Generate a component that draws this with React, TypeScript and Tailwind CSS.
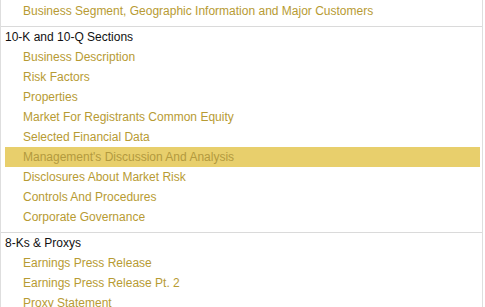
const sections: { title?: string; items: string[] }[] = [
  { items: ['Business Segment, Geographic Information and Major Customers'] },
  {
    title: '10-K and 10-Q Sections',
    items: [
      'Business Description',
      'Risk Factors',
      'Properties',
      'Market For Registrants Common Equity',
      'Selected Financial Data',
      "Management's Discussion And Analysis",
      'Disclosures About Market Risk',
      'Controls And Procedures',
      'Corporate Governance',
    ],
  },
  {
    title: '8-Ks & Proxys',
    items: ['Earnings Press Release', 'Earnings Press Release Pt. 2', 'Proxy Statement'],
  },
];

const ACTIVE = "Management's Discussion And Analysis";

export default function App() {
  return (
    <div className="w-[485px] h-[307px] overflow-hidden bg-white font-['Liberation_Sans',Arial,sans-serif] text-[12px]">
      <div className="w-[483px] h-full border-l border-r border-[#dedede] pt-[1px]">
        {sections.map((s, i) => (
          <div key={i} className="border-b border-[#dadada] pb-[5px]">
            {s.title && (
              <div className="h-[20px] leading-[20px] pl-[4px] text-[#111]">{s.title}</div>
            )}
            {s.items.map((item) => (
              <div
                key={item}
                className={
                  item === ACTIVE
                    ? 'h-[20px] leading-[20px] ml-[4px] mr-[2px] pl-[18px] bg-[#e8cf6c] text-[#b39a3e]'
                    : 'h-[20px] leading-[20px] ml-[4px] mr-[2px] pl-[18px] text-[#b79b33]'
                }
              >
                {item}
              </div>
            ))}
          </div>
        ))}
      </div>
    </div>
  );
}
